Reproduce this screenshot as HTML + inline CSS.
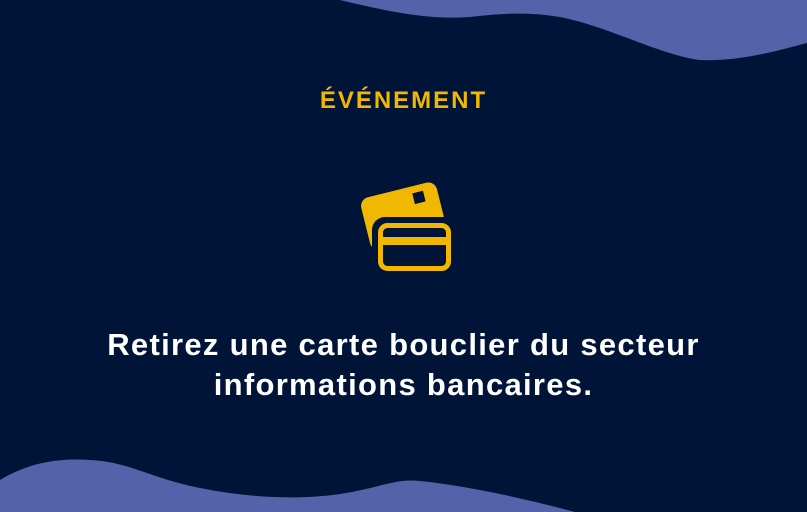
<!DOCTYPE html>
<html><head><meta charset="utf-8"><style>
html,body{margin:0;padding:0;}
body{width:807px;height:512px;background:#001438;position:relative;overflow:hidden;font-family:"Liberation Sans",sans-serif;}
svg{position:absolute;left:0;top:0;}
.t{position:absolute;left:0;width:807px;text-align:center;font-weight:bold;}
</style></head><body>
<svg width="807" height="512" viewBox="0 0 807 512">
<path d="M340 0 C390 12 430 20 470 17 C505 13 530 12 560 17 C610 27 660 55 700 60 C740 62 780 50 807 43 L807 0 Z" fill="#5462aa"/>
<path d="M0 480 C30 462 60 458 90 460 C130 462 150 478 200 488 C250 498 300 500 340 494 C380 488 395 478 420 481 C470 486 530 500 575 512 L0 512 Z" fill="#5462aa"/>
<g transform="rotate(-14 404 214)">
<rect x="364" y="189" width="78" height="54" rx="9" fill="#f0b800"/>
<rect x="417" y="196" width="11" height="11" fill="#001438"/>
</g>
<rect x="372" y="217" width="85" height="60" rx="13" fill="#001438"/>
<rect x="380.5" y="225.5" width="68" height="43" rx="7" fill="none" stroke="#f0b800" stroke-width="5"/>
<rect x="381" y="237" width="67" height="8" fill="#f0b800"/>
</svg>
<div class="t" style="top:87px;font-size:24px;color:#f0b800;letter-spacing:2px;">ÉVÉNEMENT</div>
<div class="t" style="top:325px;font-size:31px;color:#fff;line-height:40px;letter-spacing:1.3px;">Retirez une carte bouclier du secteur<br>informations bancaires.</div>
</body></html>
